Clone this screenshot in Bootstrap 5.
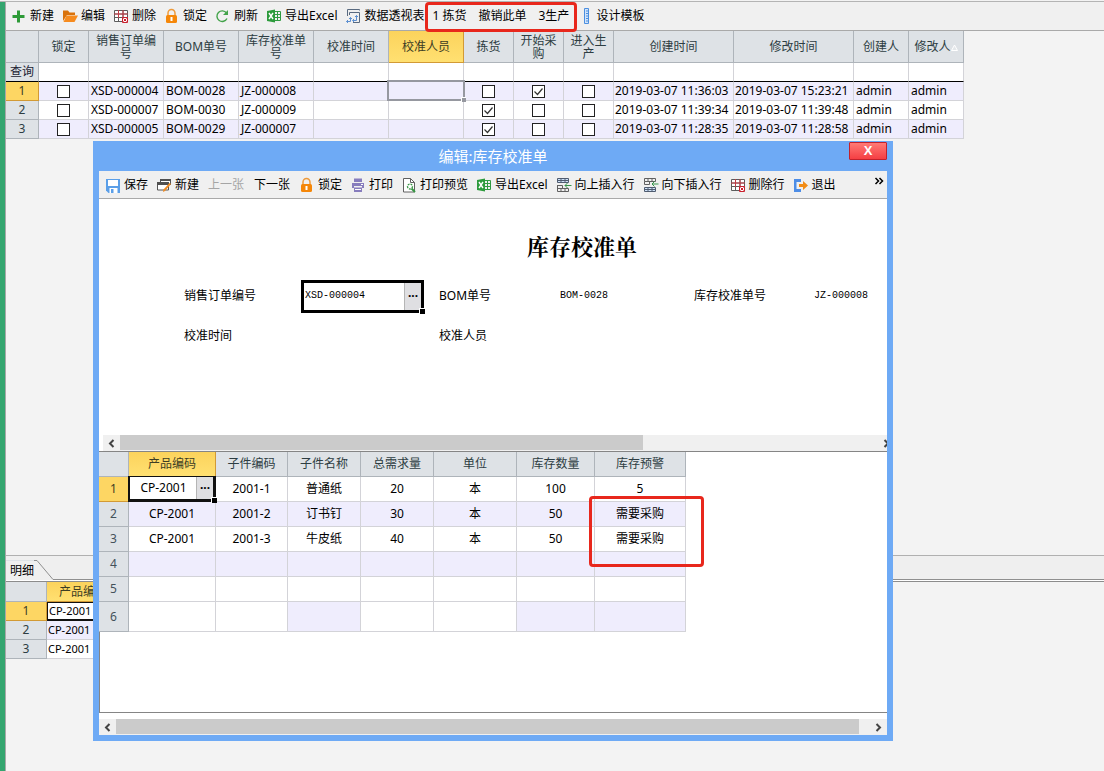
<!DOCTYPE html>
<html lang="zh-CN">
<head>
<meta charset="utf-8">
<meta name="viewport" content="width=device-width, initial-scale=1">
<title>库存校准单</title>
<link href="https://cdn.jsdelivr.net/npm/bootstrap@5.3.0/dist/css/bootstrap.min.css" rel="stylesheet">
<style>
body{font:12px/14px "Noto Sans","Noto Sans CJK SC",sans-serif;color:#000;background:#f3f3f3}
.shell{border-top:1px solid #b4b4b4;margin-top:1px;min-height:calc(100vh - 1px)}
.rail{width:5px;background:#34a56f}
.workspace{border-left:1px solid #a8a8a8}
.bar{background:#f0f0f0;border-bottom:1px solid #a9a9a9;gap:8px;padding:0 5px}
.bar-main{height:29px}
.bar-dialog{height:28px;padding:0 0 0 6px}
.tool{border:0;background:none;padding:0;display:flex;align-items:center;gap:3px;color:#000;white-space:nowrap;flex:none}
.tool svg{width:16px;height:16px;display:block}
.tool:disabled{color:#a5a5a5}
.bar-dialog .plain{padding:0 1px}
.marker{position:absolute;border:3px solid #e8271c;border-radius:4px;pointer-events:none}
.marker-tools{inset:-7px -8px -9px -8px}
.marker-stock{left:489px;top:44px;width:115px;height:71px}
.sheet{border-collapse:separate;border-spacing:0;table-layout:fixed;width:0}
.sheet th{font-weight:400;color:#2d3d42;background:#dee2e6;border-right:1px solid #aeb4ba;border-bottom:1px solid #aeb4ba;text-align:center;padding:0}
.sheet td{background:#fff;border-right:1px solid #d3d3d8;border-bottom:1px solid #d3d3d8;padding:0 2px;white-space:nowrap}
.sheet td.clip{overflow:hidden;padding:0 1px}
.sheet .tint td,.sheet td.tinted{background:#efedfd}
.sheet th.active{background:linear-gradient(#fcd35c,#ffe071);border-color:#d29a35;color:#3d3d24}
.sheet tbody th.active{background:#fdd663}
.orders thead tr{height:32px}
.orders thead th{line-height:13px}
.orders tbody tr{height:19px}
.orders .query th,.orders .query td{border-bottom-color:#000}
.orders .query th{color:#223}
.tick{appearance:none;display:block;width:13px;height:13px;margin:0 auto;border:1px solid #222;background:#fff}
.tick:checked{background:#fff url("data:image/svg+xml,%3Csvg xmlns='http://www.w3.org/2000/svg' viewBox='0 0 11 11'%3E%3Cpath d='M1.5 5.5l3 3 5-6' fill='none' stroke='%23333' stroke-width='1.2'/%3E%3C/svg%3E")}
.cursor{position:absolute;inset:-2px -2px -1px -2px;border:2px solid #9698a0}
.cursor::after,.picked::after{content:"";position:absolute;right:-3px;bottom:-3px;width:5px;height:5px;background:#9698a0;border:solid #fff;border-width:1px 0 0 1px}
.details{height:216px;border-top:1px solid #b0b0b0}
.tabs{height:24px;background:#efefef}
.tabs svg{height:20px}
.tab-line{border-bottom:1px solid #8f8f8f}
.tab-text{border:0;padding:0 0 0 4px;background:none;height:20px;line-height:20px;color:#000}
.rule{height:2px;border-bottom:1px solid #8c8c8c;background:#fff}
.parts tr{height:19px}
.parts td{font-size:11px;padding:0 1px}
.parts thead tr{height:20px}
.parts thead th{font-size:12px}
.parts td.focus-cell{border:solid #111;border-width:1px 1px 2px}
.window{position:absolute;left:93px;top:141px;width:800px;height:600px;background:#6eaaf5;padding:0 6px 6px}
.window-title{height:30px;font-size:15px;color:#fff}
.close-btn{position:absolute;right:6px;top:1px;width:38px;height:18px;border:1px solid #c2222c;border-radius:1px;background:linear-gradient(#ff7a75,#f53f43);color:#fff;font:bold 13px/14px "Liberation Sans",sans-serif;padding:0}
.form-area{height:236px;overflow:hidden;padding:33px 0 0 85px}
.form-sheet{width:796px;display:grid;grid-template-columns:117px 138px 121px 134px 120px 166px;grid-template-rows:44px;grid-auto-rows:40px;align-items:center}
.form-sheet h1{grid-column:1/-1;align-self:start;font:bold 22px/28px "Noto Serif CJK SC","Noto Sans CJK SC",serif;margin:0;text-align:center}
.form-sheet output,.field input{font:10px/14px "Liberation Mono",monospace;color:#000}
.field{position:relative;width:123px;height:33px;border:3px solid #000;display:flex}
.field input,.cell-edit input{border:0;padding:0 0 0 1px;min-width:0;flex:1;background:#fff;outline:0}
.field button,.cell-edit button{width:17px;flex:none;border:0;border-left:1px solid #b5b5b5;background:#dfdfe2;padding:0;font:bold 12px/12px "Noto Sans",sans-serif}
.picked::after{right:-4px;bottom:-4px;width:6px;height:6px;background:#000}
.scroller{height:16px;background:#f0f0f0;display:flex;overflow:hidden;flex:none}
.scroller button{border:0;padding:0;background:none;width:17px;flex:none;display:grid;place-items:center}
.scroller .cut{margin-right:-8px}
.scroller svg{width:7px;height:9px}
.thumb{background:#cbcbcb;height:15px}
.lines{border:solid #858585;border-width:1px 0 1px 1px;flex:1;position:relative}
.gutter{padding-top:6px}
.items{margin-left:-1px}
.items tr{height:25px}
.items .last{height:30px}
.items td{text-align:center}
.items td:has(.cell-edit){padding:0}
.items tbody th{color:#44515a}
.cell-edit{position:relative;width:88px;height:26px;margin:-1px 0 -1px -1px;border:solid #111;border-width:1px 3px 3px 2px;display:flex}
.cell-edit input{font:12px/14px "Noto Sans",sans-serif;text-align:center;color:#000}
</style>
</head>
<body>
<svg class="d-none" aria-hidden="true">
<symbol id="plus" viewBox="0 0 16 16"><path d="M6 2.500h3v4.500h4.500v3H9v4.500H6V10H1.500V7H6z" fill="#2d9a37"/></symbol>
<symbol id="folder" viewBox="0 0 16 16"><path d="M1 13V2.500h5l1.500 2H13V7H5z" fill="#d9720b"/><path d="M4.500 7.500H16L12.500 14H1.500z" fill="#f68b1e"/></symbol>
<symbol id="gridx" viewBox="0 0 16 16"><path d="M1.500 2.500h13v11h-13zM1.500 6h13M1.500 9.500h13M5.500 2.500v11M10 2.500v11" fill="#fff" stroke="#5c5c5c"/><path d="M1 6h14M5.500 2v8M10 2v8" stroke="#c43b45"/><path d="M9.500 9.500h5v5h-5z" fill="#fff" stroke="#c9202d"/><path d="M10.500 10.500l3 3m0-3l-3 3" stroke="#c9202d"/></symbol>
<symbol id="lock" viewBox="0 0 16 16"><path d="M4 8V5a3.500 3.500 0 0 1 7 0v3" fill="none" stroke="#ee9a3a" stroke-width="1.500"/><rect x="2" y="7" width="11" height="8" rx="1.500" fill="#f58709"/><path d="M6.500 9h2v4h-2z" fill="#fff"/></symbol>
<symbol id="refresh" viewBox="0 0 16 16"><path d="M11.500 5A5.300 5.300 0 1 0 12 10.500" fill="none" stroke="#43a34a" stroke-width="1.400"/><path d="M13 2v5H8z" fill="#43a34a"/></symbol>
<symbol id="excel" viewBox="0 0 16 16"><path d="M8 3.500h6.500v9H8M11.500 3.500v9M8 6.500h6.500M8 9.500h6.500" fill="none" stroke="#2f9a40"/><path d="M1 3l8-1.500v13L1 13z" fill="#2d9b3c"/><path d="M3 5l4 6M7 5l-4 6" stroke="#fff" stroke-width="1.400"/></symbol>
<symbol id="pivot" viewBox="0 0 16 16"><path d="M2.500 8V1.500h12v1M4.500 7V4.500h10v10H8" fill="none" stroke="#596a80"/><path d="M1.500 13.500h4v-4M4 11l1.500-1.500L7 11M3 12l-1.500 1.500L3 15M8 12.500h3.500V7.500M10 9l1.500-1.500L13 9M9 11l-1.500 1.500L9 14" fill="none" stroke="#5c8fd0"/></symbol>
<symbol id="ruler" viewBox="0 0 16 16"><path d="M7.500.500h4v15h-4z" fill="#d2e4fa" stroke="#4b8fe0"/><path d="M9 3h3M9 5.500h3M9 8h3M9 10.500h3M9 13h3" stroke="#4b8fe0"/></symbol>
<symbol id="save" viewBox="0 0 16 16"><path d="M1 2h14v14H3.500L1 13.500z" fill="#5b9fe8"/><path d="M3 3h10v6H3zM4.500 11h8v5h-8z" fill="#fff"/><path d="M6 12h2.500v4H6z" fill="#5b9fe8"/></symbol>
<symbol id="newdoc" viewBox="0 0 16 16"><path d="M4.500 5V2.500h10V8M1.500 5.500h11v7.500h-11z" fill="#fff" stroke="#555"/><path d="M4 2h11v2H4zM1 5h12v3H1z" fill="#505050"/><path d="M15 7l-6 7-2 1 .5-2.500 6-6.500z" fill="#f18b22"/></symbol>
<symbol id="printer" viewBox="0 0 16 16"><path d="M4 1.500h8V5H4zM2 6h12v5h-2V9H4v2H2zM4 10.500h8V15H4z" fill="#877dbd"/><path d="M5 12h6v1H5zM11 7h2v1h-2z" fill="#fff"/></symbol>
<symbol id="preview" viewBox="0 0 16 16"><path d="M2.500 1.500h7l4 4v9.500h-11z" fill="#fff" stroke="#606060"/><path d="M9.500 1.500v4h4" fill="none" stroke="#606060"/><circle cx="9" cy="9.500" r="2.500" fill="none" stroke="#369642" stroke-width="1.300" stroke-dasharray="2 1"/><path d="M10.500 11.500L14 15" stroke="#369642" stroke-width="2"/></symbol>
<symbol id="insup" viewBox="0 0 16 16"><path d="M1.500 1.500h11v4h-11zM1.500 3.500h11M5 1.500v4M9 1.500v4" fill="#cfe2f8" stroke="#505c70"/><path d="M1.500 8.500h5v3M1.500 8v6.500h11v-3h-11M5 11.500v3M9 11.500v3" fill="none" stroke="#606060"/><path d="M15.500 8.500H9m2.500-2.500L9 8.500l2.500 2.500" fill="none" stroke="#36954b"/></symbol>
<symbol id="insdown" viewBox="0 0 16 16"><path d="M1.500 1.500h11v3h-11zM5 1.500v3M9 1.500v3M1.500 4.500v3h5v-3" fill="none" stroke="#606060"/><path d="M1.500 10.500h11v4h-11zM1.500 12.500h11M5 10.500v4M9 10.500v4" fill="#cfe2f8" stroke="#505c70"/><path d="M15.500 7H9m2.500-2.500L9 7l2.500 2.500" fill="none" stroke="#36954b"/></symbol>
<symbol id="exit" viewBox="0 0 16 16"><path d="M8 2H1v13h7v-3H3.500V5H8z" fill="#4d8de6"/><path d="M6 7h4V4l5 4.500-5 4.500v-3H6z" fill="#f28c16"/></symbol>
</svg>

<div class="shell d-flex">
<div class="rail flex-shrink-0"></div>
<div class="workspace flex-grow-1 d-flex flex-column overflow-hidden">
<nav class="bar bar-main d-flex align-items-center" aria-label="主工具栏">
<button class="tool"><svg><use href="#plus"/></svg>新建</button>
<button class="tool"><svg><use href="#folder"/></svg>编辑</button>
<button class="tool"><svg><use href="#gridx"/></svg>删除</button>
<button class="tool"><svg><use href="#lock"/></svg>锁定</button>
<button class="tool"><svg><use href="#refresh"/></svg>刷新</button>
<button class="tool"><svg><use href="#excel"/></svg>导出Excel</button>
<button class="tool"><svg><use href="#pivot"/></svg>数据透视表</button>
<div class="position-relative d-flex gap-2">
<button class="tool">1 拣货</button>
<button class="tool px-1">撤销此单</button>
<button class="tool">3生产</button>
<span class="marker marker-tools"></span>
</div>
<button class="tool"><svg><use href="#ruler"/></svg>设计模板</button>
</nav>

<main class="flex-grow-1">
<table class="sheet orders">
<colgroup><col style="width:33px"><col style="width:50px"><col style="width:75px"><col style="width:75px"><col style="width:75px"><col style="width:75px"><col style="width:75px"><col style="width:50px"><col style="width:50px"><col style="width:50px"><col style="width:120px"><col style="width:120px"><col style="width:55px"><col style="width:55px"></colgroup>
<thead><tr><th></th><th>锁定</th><th class="px-1">销售订单编号</th><th>BOM单号</th><th class="px-1">库存校准单号</th><th>校准时间</th><th class="active">校准人员</th><th>拣货</th><th class="px-1">开始采购</th><th class="px-1">进入生产</th><th>创建时间</th><th>修改时间</th><th>创建人</th><th class="text-nowrap overflow-hidden">修改人<svg width="7" height="7" viewBox="0 0 7 7" aria-hidden="true"><path d="M.5 6.500L3.500 1l3 5.500z" fill="#e4e7ea" stroke="#fff"/></svg></th></tr></thead>
<tbody>
<tr class="query"><th>查询</th><td></td><td></td><td></td><td></td><td></td><td></td><td></td><td></td><td></td><td></td><td></td><td></td><td></td></tr>
<tr class="tint"><th class="active">1</th><td><input class="tick" type="checkbox" aria-label="锁定"></td><td>XSD-000004</td><td>BOM-0028</td><td>JZ-000008</td><td></td><td class="position-relative"><span class="cursor"></span></td><td><input class="tick" type="checkbox" aria-label="拣货"></td><td><input class="tick" type="checkbox" aria-label="开始采购" checked></td><td><input class="tick" type="checkbox" aria-label="进入生产"></td><td class="clip">2019-03-07 11:36:03</td><td class="clip">2019-03-07 15:23:21</td><td>admin</td><td>admin</td></tr>
<tr><th>2</th><td><input class="tick" type="checkbox" aria-label="锁定"></td><td>XSD-000007</td><td>BOM-0030</td><td>JZ-000009</td><td></td><td></td><td><input class="tick" type="checkbox" aria-label="拣货" checked></td><td><input class="tick" type="checkbox" aria-label="开始采购"></td><td><input class="tick" type="checkbox" aria-label="进入生产"></td><td class="clip">2019-03-07 11:39:34</td><td class="clip">2019-03-07 11:39:48</td><td>admin</td><td>admin</td></tr>
<tr class="tint"><th>3</th><td><input class="tick" type="checkbox" aria-label="锁定"></td><td>XSD-000005</td><td>BOM-0029</td><td>JZ-000007</td><td></td><td></td><td><input class="tick" type="checkbox" aria-label="拣货" checked></td><td><input class="tick" type="checkbox" aria-label="开始采购"></td><td><input class="tick" type="checkbox" aria-label="进入生产"></td><td class="clip">2019-03-07 11:28:35</td><td class="clip">2019-03-07 11:28:58</td><td>admin</td><td>admin</td></tr>
</tbody>
</table>
</main>

<section class="details">
<div class="tabs d-flex align-items-end">
<button class="tab-text border-top">明细</button>
<svg width="22" viewBox="0 0 22 20" aria-hidden="true"><path d="M0 .5h3L19 19.500h3" fill="none" stroke="#8f8f8f"/></svg>
<span class="tab-line flex-grow-1"></span>
</div>
<div class="rule"></div>
<table class="sheet parts">
<colgroup><col style="width:41px"><col style="width:73px"></colgroup>
<thead><tr><th></th><th class="active">产品编码</th></tr></thead>
<tbody><tr><th class="active">1</th><td class="focus-cell">CP-2001</td></tr><tr class="tint"><th>2</th><td>CP-2001</td></tr><tr><th>3</th><td>CP-2001</td></tr></tbody>
</table>
</section>
</div>
</div>

<section class="window d-flex flex-column" role="dialog" aria-label="编辑:库存校准单">
<header class="window-title d-flex align-items-center justify-content-center flex-shrink-0">编辑:库存校准单<button class="close-btn" aria-label="关闭">X</button></header>
<nav class="bar bar-dialog d-flex align-items-center flex-shrink-0" aria-label="编辑工具栏">
<button class="tool"><svg><use href="#save"/></svg>保存</button>
<button class="tool"><svg><use href="#newdoc"/></svg>新建</button>
<button class="tool plain" disabled>上一张</button>
<button class="tool plain">下一张</button>
<button class="tool"><svg><use href="#lock"/></svg>锁定</button>
<button class="tool"><svg><use href="#printer"/></svg>打印</button>
<button class="tool"><svg><use href="#preview"/></svg>打印预览</button>
<button class="tool"><svg><use href="#excel"/></svg>导出Excel</button>
<button class="tool"><svg><use href="#insup"/></svg>向上插入行</button>
<button class="tool"><svg><use href="#insdown"/></svg>向下插入行</button>
<button class="tool"><svg><use href="#gridx"/></svg>删除行</button>
<button class="tool"><svg><use href="#exit"/></svg>退出</button>
<button class="tool ms-auto pb-2" aria-label="更多"><svg viewBox="0 0 16 16"><path d="M4.500 5l3 3-3 3M8.500 5l3 3-3 3" fill="none" stroke="#000" stroke-width="1.500"/></svg></button>
</nav>
<form class="form-area bg-white flex-shrink-0">
<div class="form-sheet">
<h1>库存校准单</h1>
<label for="order">销售订单编号</label>
<div class="field picked"><input id="order" value="XSD-000004"><button type="button" aria-label="选择销售订单">···</button></div>
<label for="bom">BOM单号</label><output id="bom">BOM-0028</output>
<label for="doc">库存校准单号</label><output id="doc">JZ-000008</output>
<label for="when">校准时间</label><output id="when"></output>
<label for="who">校准人员</label><output id="who"></output>
</div>
</form>
<div class="bg-white ps-1">
<div class="scroller">
<button aria-label="向左"><svg viewBox="0 0 7 9"><path d="M5.500 1L2 4.500 5.500 8" fill="none" stroke="#444" stroke-width="2"/></svg></button>
<div class="thumb" style="width:66.700%"></div>
<button class="ms-auto cut" aria-label="向右"><svg viewBox="0 0 7 9"><path d="M1.500 1L5 4.500 1.500 8" fill="none" stroke="#444" stroke-width="2"/></svg></button>
</div>
</div>
<div class="lines bg-white">
<table class="sheet items">
<colgroup><col style="width:30px"><col style="width:87px"><col style="width:72px"><col style="width:73px"><col style="width:73px"><col style="width:83px"><col style="width:78px"><col style="width:91px"></colgroup>
<thead><tr><th></th><th class="active">产品编码</th><th>子件编码</th><th>子件名称</th><th>总需求量</th><th>单位</th><th>库存数量</th><th>库存预警</th></tr></thead>
<tbody>
<tr><th class="active">1</th><td><div class="cell-edit picked"><input value="CP-2001" aria-label="产品编码"><button aria-label="选择产品">···</button></div></td><td>2001-1</td><td>普通纸</td><td>20</td><td>本</td><td>100</td><td>5</td></tr>
<tr class="tint"><th>2</th><td>CP-2001</td><td>2001-2</td><td>订书钉</td><td>30</td><td>本</td><td>50</td><td>需要采购</td></tr>
<tr><th>3</th><td>CP-2001</td><td>2001-3</td><td>牛皮纸</td><td>40</td><td>本</td><td>50</td><td>需要采购</td></tr>
<tr class="tint"><th>4</th><td></td><td></td><td></td><td></td><td></td><td></td><td></td></tr>
<tr><th>5</th><td></td><td></td><td></td><td></td><td></td><td></td><td></td></tr>
<tr class="last"><th>6</th><td></td><td></td><td class="tinted"></td><td></td><td></td><td class="tinted"></td><td class="tinted"></td></tr>
</tbody>
</table>
<span class="marker marker-stock"></span>
</div>
<div class="bg-white gutter flex-shrink-0">
<div class="scroller">
<button aria-label="向左"><svg viewBox="0 0 7 9"><path d="M5.500 1L2 4.500 5.500 8" fill="none" stroke="#444" stroke-width="2"/></svg></button>
<div class="thumb" style="width:94.300%"></div>
<button class="ms-auto" aria-label="向右"><svg viewBox="0 0 7 9"><path d="M1.500 1L5 4.500 1.500 8" fill="none" stroke="#444" stroke-width="2"/></svg></button>
</div>
</div>
</section>
<script src="https://cdn.jsdelivr.net/npm/bootstrap@5.3.0/dist/js/bootstrap.bundle.min.js"></script>
</body>
</html>
